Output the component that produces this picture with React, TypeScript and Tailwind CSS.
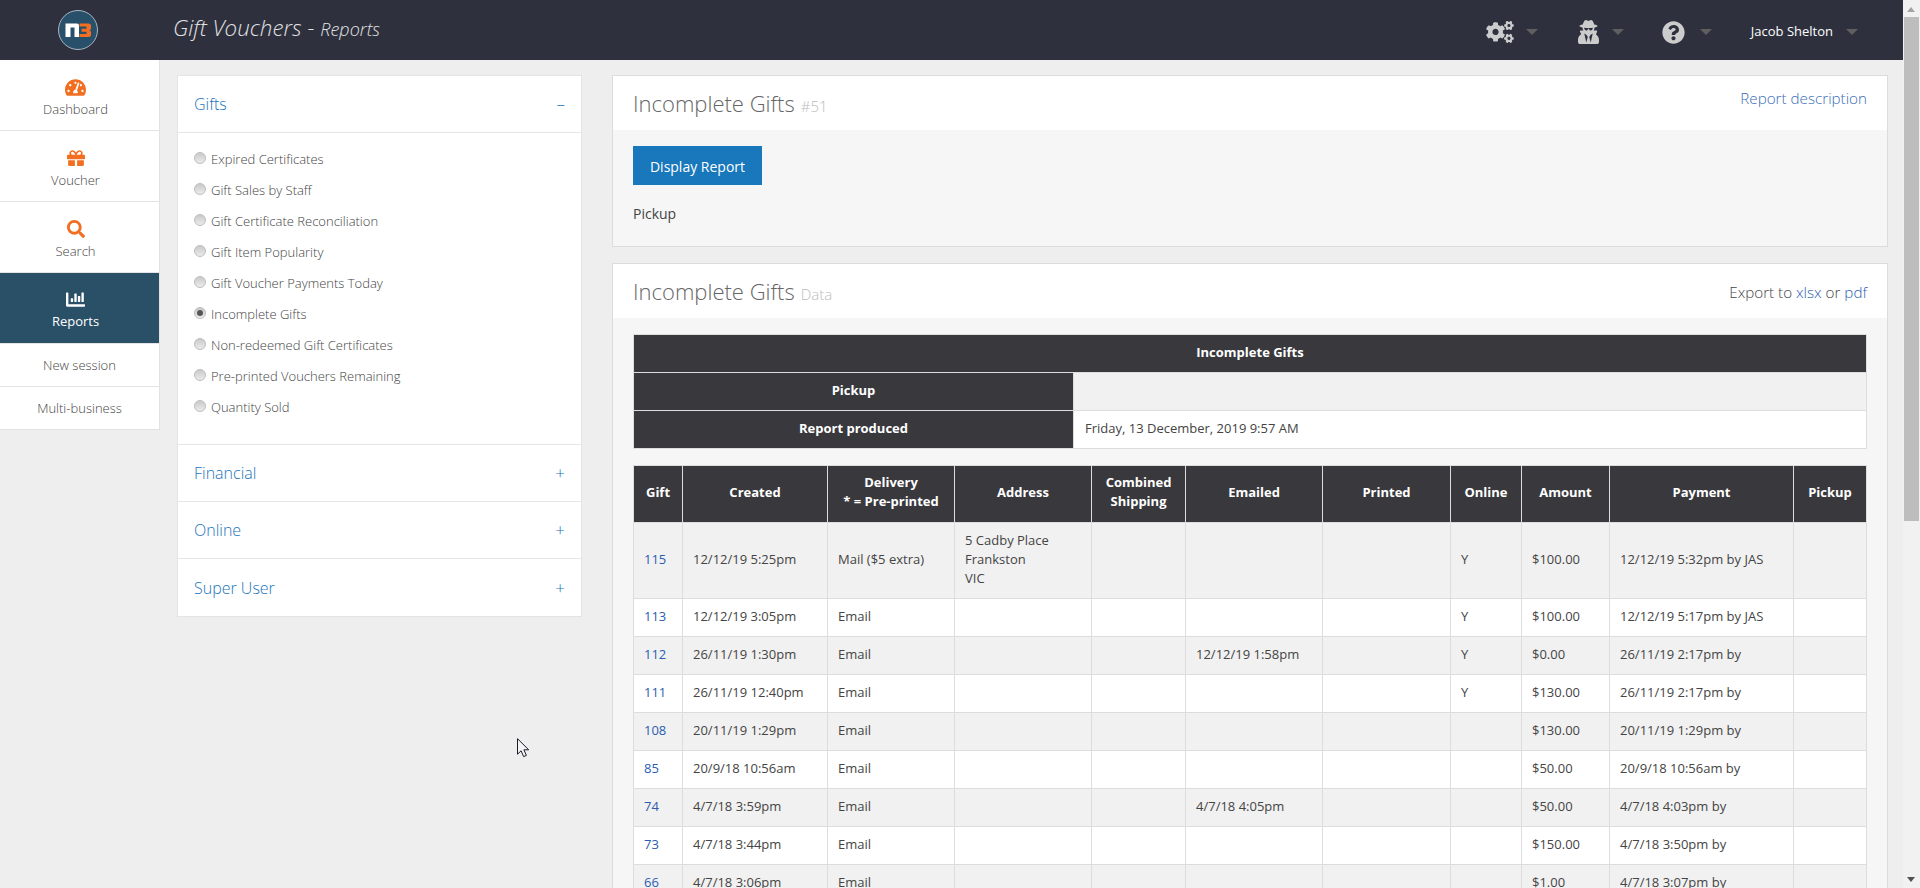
import { FaChartBar, FaCogs, FaGift, FaQuestionCircle, FaSearch, FaTachometerAlt, FaUserSecret } from "react-icons/fa"

const FONT = "font-['Open_Sans',sans-serif]"

const NAV_ITEMS = [
  { label: "Dashboard", icon: <FaTachometerAlt className="h-[21px] w-[21px]" /> },
  { label: "Voucher", icon: <FaGift className="h-[18px] w-[18px]" /> },
  { label: "Search", icon: <FaSearch className="h-[18px] w-[18px]" /> },
]

const GIFT_REPORTS = [
  "Expired Certificates",
  "Gift Sales by Staff",
  "Gift Certificate Reconciliation",
  "Gift Item Popularity",
  "Gift Voucher Payments Today",
  "Incomplete Gifts",
  "Non-redeemed Gift Certificates",
  "Pre-printed Vouchers Remaining",
  "Quantity Sold",
]

const COLUMN_WIDTHS = [49, 145, 127, 137, 94, 137, 128, 71, 88, 184, 73]

type GiftRow = {
  gift: string
  created: string
  delivery: string
  address?: string[]
  emailed?: string
  online?: string
  amount: string
  payment: string
}

const GIFT_ROWS: GiftRow[] = [
  { gift: "115", created: "12/12/19 5:25pm", delivery: "Mail ($5 extra)", address: ["5 Cadby Place", "Frankston", "VIC"], online: "Y", amount: "$100.00", payment: "12/12/19 5:32pm by JAS" },
  { gift: "113", created: "12/12/19 3:05pm", delivery: "Email", online: "Y", amount: "$100.00", payment: "12/12/19 5:17pm by JAS" },
  { gift: "112", created: "26/11/19 1:30pm", delivery: "Email", emailed: "12/12/19 1:58pm", online: "Y", amount: "$0.00", payment: "26/11/19 2:17pm by" },
  { gift: "111", created: "26/11/19 12:40pm", delivery: "Email", online: "Y", amount: "$130.00", payment: "26/11/19 2:17pm by" },
  { gift: "108", created: "20/11/19 1:29pm", delivery: "Email", amount: "$130.00", payment: "20/11/19 1:29pm by" },
  { gift: "85", created: "20/9/18 10:56am", delivery: "Email", amount: "$50.00", payment: "20/9/18 10:56am by" },
  { gift: "74", created: "4/7/18 3:59pm", delivery: "Email", emailed: "4/7/18 4:05pm", amount: "$50.00", payment: "4/7/18 4:03pm by" },
  { gift: "73", created: "4/7/18 3:44pm", delivery: "Email", amount: "$150.00", payment: "4/7/18 3:50pm by" },
  { gift: "66", created: "4/7/18 3:06pm", delivery: "Email", amount: "$1.00", payment: "4/7/18 3:07pm by" },
]

const TH_CLASS = "h-[38px] border border-[#ddd] bg-[#39383d] px-2 pb-[2px] text-center align-middle text-[13px] font-bold leading-[19px] text-white"
const HEAD_CLASS = "h-[57px] border border-[#ddd] bg-[#39383d] px-2 pb-[4px] text-center align-middle text-[13px] font-bold leading-[19px] text-white"
const TD_CLASS = "border border-[#ddd] px-[10px] pb-[2px] align-middle text-[13px] leading-[19px]"

function Caret() {
  return <span className="h-0 w-0 border-x-[6px] border-t-[6px] border-x-transparent border-t-[#5f5f5f]" />
}

function Logo() {
  return (
    <svg viewBox="0 0 40 40" className="h-[40px] w-[40px]">
      <circle cx="20" cy="20" r="19.5" fill="#29506a" stroke="#a9b6bf" />
      <path d="M7.5 27V13.5h11.5q2 0 2 2V27h-4.5V17.5h-4V27z" fill="#fff" />
      <path d="M21.5 13.5h9q2.5 0 2.5 2.2v2.6q0 1.5-1.5 1.9 1.5.4 1.5 1.9v3q0 1.9-2.5 1.9h-9v-3h7v-2.3h-5v-3h5v-2.2h-7z" fill="#f26f21" />
    </svg>
  )
}

function TopBar() {
  return (
    <header className="flex h-[60px] shrink-0 items-center bg-[#2e303e]">
      <div className="ml-[58px]">
        <Logo />
      </div>
      <div className="ml-[75px] mb-[4px] flex items-baseline italic font-light text-[#e2e2e2]">
        <span className="text-[22.3px]">Gift Vouchers</span>
        <span className="ml-[6px] text-[22px]">-</span>
        <span className="ml-[6px] text-[18px]">Reports</span>
      </div>
      <div className="ml-auto flex items-center pt-[4px] text-[#cccccc]">
        <FaCogs className="h-[22px] w-[28px]" />
        <span className="ml-[12px] flex"><Caret /></span>
        <FaUserSecret className="ml-[40px] h-[24px] w-[21px]" />
        <span className="ml-[13px] flex"><Caret /></span>
        <FaQuestionCircle className="ml-[38px] h-[23px] w-[23px]" />
        <span className="ml-[15px] flex"><Caret /></span>
        <span className="ml-[39px] text-[13px] text-white">Jacob Shelton</span>
        <span className="ml-[13px] mr-[45px] flex"><Caret /></span>
      </div>
    </header>
  )
}

function SideNav() {
  return (
    <nav className="w-[160px] shrink-0 self-start border-r border-b border-[#e2e2e2] bg-white">
      {NAV_ITEMS.map((item) => (
        <div key={item.label} className="flex h-[71px] flex-col items-center border-b border-[#e4e4e4] pr-[8px] pt-[16px] text-[13px] font-light text-[#444]">
          <span className="flex h-[22px] items-center text-[#f26f21]">{item.icon}</span>
          <span className="mt-[1px] leading-[20px]">{item.label}</span>
        </div>
      ))}
      <div className="flex h-[71px] flex-col items-center border-b border-[#e4e4e4] bg-[#2a5068] pr-[8px] pt-[15px] text-[13px] text-white">
        <span className="flex h-[22px] items-center"><FaChartBar className="h-[19px] w-[19px]" /></span>
        <span className="mt-[1px] leading-[20px]">Reports</span>
      </div>
      <div className="flex h-[43px] items-center justify-center border-b border-[#e4e4e4] pt-[1px] text-[13px] font-light text-[#444]">New session</div>
      <div className="flex h-[42px] items-center justify-center pt-[1px] text-[13px] font-light text-[#444]">Multi-business</div>
    </nav>
  )
}

function ReportRadio({ label, checked }: { label: string; checked: boolean }) {
  return (
    <label className="flex h-[31px] items-center text-[13px] font-light text-[#444]">
      <span className="mb-[4px] flex h-[12px] w-[12px] items-center justify-center rounded-full border border-[#bdbdbd] bg-gradient-to-b from-[#c9c9c9] to-[#ececec]">
        {checked && <span className="h-[6px] w-[6px] rounded-full bg-[#555]" />}
      </span>
      <span className="ml-[5px]">{label}</span>
    </label>
  )
}

function AccordionHead({ title, sign, bordered }: { title: string; sign: string; bordered: boolean }) {
  return (
    <div className={`flex h-[57px] items-center justify-between pl-[16px] pr-[16px] text-[16px] font-light text-[#1a74bb] ${bordered ? "border-b border-[#e6e6e6]" : ""}`}>
      <span>{title}</span>
      <span className="text-[17px]">{sign}</span>
    </div>
  )
}

function ReportPicker() {
  return (
    <aside className="ml-[17px] w-[405px] shrink-0 self-start border border-[#e4e4e4] bg-white">
      <AccordionHead title="Gifts" sign="–" bordered />
      <div className="h-[312px] border-b border-[#e6e6e6] pl-[16px] pt-[11px]">
        {GIFT_REPORTS.map((report) => (
          <ReportRadio key={report} label={report} checked={report === "Incomplete Gifts"} />
        ))}
      </div>
      <AccordionHead title="Financial" sign="+" bordered />
      <AccordionHead title="Online" sign="+" bordered />
      <AccordionHead title="Super User" sign="+" bordered={false} />
    </aside>
  )
}

function PanelHead({ title, tag, children }: { title: string; tag: string; children: React.ReactNode }) {
  return (
    <div className="flex h-[54px] items-start justify-between bg-white px-[20px] pt-[11px]">
      <div className="flex items-baseline">
        <span className="text-[22px] font-light text-[#666]">{title}</span>
        <span className="ml-[6px] text-[15px] font-light text-[#bbb]">{tag}</span>
      </div>
      <div className="text-[15.2px] font-light text-[#444]">{children}</div>
    </div>
  )
}

function SummaryTable() {
  return (
    <table className="w-full table-fixed border-collapse">
      <colgroup>
        <col className="w-[440px]" />
        <col />
      </colgroup>
      <tbody>
        <tr>
          <th colSpan={2} className={TH_CLASS}>Incomplete Gifts</th>
        </tr>
        <tr>
          <th className={TH_CLASS}>Pickup</th>
          <td className={`${TD_CLASS} h-[38px] bg-[#f1f1f1]`} />
        </tr>
        <tr>
          <th className={TH_CLASS}>Report produced</th>
          <td className={`${TD_CLASS} h-[38px] bg-white pl-[11px] text-[#444]`}>Friday, 13 December, 2019 9:57 AM</td>
        </tr>
      </tbody>
    </table>
  )
}

function GiftsTable() {
  return (
    <table className="mt-[16px] w-full table-fixed border-collapse">
      <colgroup>
        {COLUMN_WIDTHS.map((width, index) => (
          <col key={index} style={{ width }} />
        ))}
      </colgroup>
      <thead>
        <tr>
          <th className={HEAD_CLASS}>Gift</th>
          <th className={HEAD_CLASS}>Created</th>
          <th className={HEAD_CLASS}>Delivery<br />* = Pre-printed</th>
          <th className={HEAD_CLASS}>Address</th>
          <th className={HEAD_CLASS}>Combined<br />Shipping</th>
          <th className={HEAD_CLASS}>Emailed</th>
          <th className={HEAD_CLASS}>Printed</th>
          <th className={HEAD_CLASS}>Online</th>
          <th className={HEAD_CLASS}>Amount</th>
          <th className={HEAD_CLASS}>Payment</th>
          <th className={HEAD_CLASS}>Pickup</th>
        </tr>
      </thead>
      <tbody className="text-[#444]">
        {GIFT_ROWS.map((row, index) => (
          <tr key={row.gift} className={`${index % 2 === 0 ? "bg-[#f1f1f1]" : "bg-white"} ${row.address ? "h-[76px]" : "h-[38px]"}`}>
            <td className={`${TD_CLASS} text-[#2a5db0]`}>{row.gift}</td>
            <td className={TD_CLASS}>{row.created}</td>
            <td className={TD_CLASS}>{row.delivery}</td>
            <td className={TD_CLASS}>
              {row.address?.map((line) => (
                <div key={line} className="leading-[19px]">{line}</div>
              ))}
            </td>
            <td className={TD_CLASS} />
            <td className={TD_CLASS}>{row.emailed}</td>
            <td className={TD_CLASS} />
            <td className={TD_CLASS}>{row.online}</td>
            <td className={TD_CLASS}>{row.amount}</td>
            <td className={TD_CLASS}>{row.payment}</td>
            <td className={TD_CLASS} />
          </tr>
        ))}
      </tbody>
    </table>
  )
}

function ReportArea() {
  return (
    <main className="ml-[30px] mr-[15px] min-w-0 flex-1">
      <section className="border border-[#dcdcdc] bg-[#f6f6f6]">
        <PanelHead title="Incomplete Gifts" tag="#51">
          <span className="text-[#3a6db5]">Report description</span>
        </PanelHead>
        <div className="h-[116px] px-[20px] pt-[16px]">
          <button type="button" className="h-[39px] w-[129px] bg-[#1878bb] pt-[1px] text-[14px] text-white">Display Report</button>
          <p className="mt-[18px] text-[14px] text-[#444]">Pickup</p>
        </div>
      </section>
      <section className="mt-[16px] border border-[#dcdcdc] bg-[#f6f6f6]">
        <PanelHead title="Incomplete Gifts" tag="Data">
          <div className="mt-[6px]">
            Export to <span className="text-[#2a5db0]">xlsx</span> or <span className="text-[#2a5db0]">pdf</span>
          </div>
        </PanelHead>
        <div className="px-[20px] pt-[16px]">
          <SummaryTable />
          <GiftsTable />
        </div>
      </section>
    </main>
  )
}

function ScrollBar() {
  return (
    <div className="relative w-[17px] shrink-0 bg-[#f1f1f1]">
      <span className="absolute left-[4px] top-[7px] h-0 w-0 border-x-[4px] border-b-[5px] border-x-transparent border-b-[#a3a3a3]" />
      <div className="absolute left-[1px] top-[17px] h-[504px] w-[15px] bg-[#bdbdbd]" />
      <span className="absolute bottom-[6px] left-[4px] h-0 w-0 border-x-[4px] border-t-[5px] border-x-transparent border-t-[#505050]" />
    </div>
  )
}

function MouseCursor() {
  return (
    <svg viewBox="0 0 13 20" className="absolute left-[517px] top-[738px] h-[20px] w-[13px]">
      <path d="M.5.7v15.5l3.6-3.4 2.5 5.8 2.8-1.2-2.5-5.6h4.8z" fill="#f3f3f3" stroke="#1b1b2a" strokeWidth="1" />
    </svg>
  )
}

export default function App() {
  return (
    <div className={`${FONT} relative flex h-[888px] overflow-hidden bg-[#eeeeee]`}>
      <div className="flex min-w-0 flex-1 flex-col">
        <TopBar />
        <div className="flex">
          <SideNav />
          <div className="flex min-w-0 flex-1 pt-[15px]">
            <ReportPicker />
            <ReportArea />
          </div>
        </div>
      </div>
      <ScrollBar />
      <MouseCursor />
    </div>
  )
}
